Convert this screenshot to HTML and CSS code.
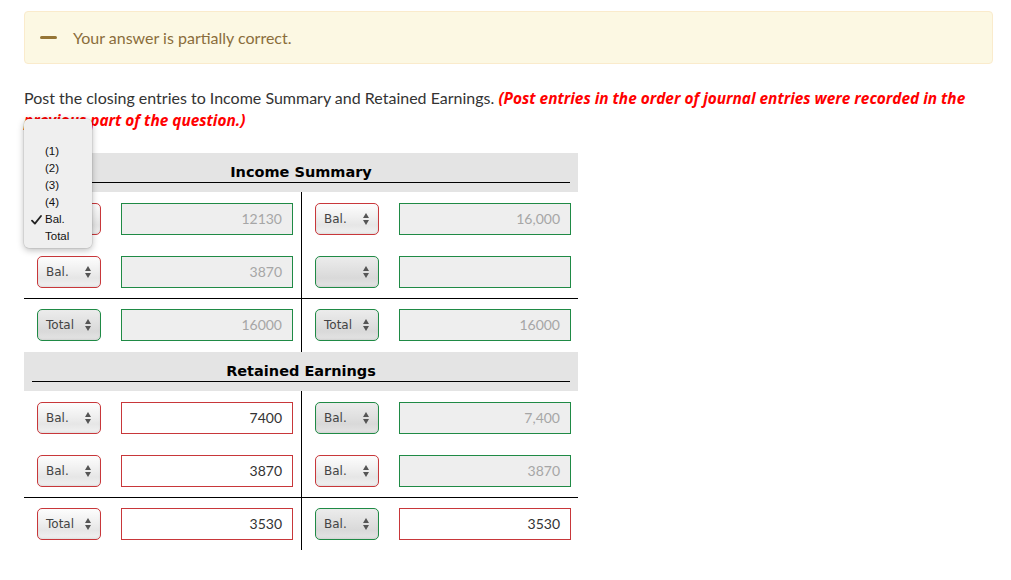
FILE: index.html
```html
<!DOCTYPE html>
<html>
<head>
<meta charset="utf-8">
<link rel="stylesheet" href="styles.css">
</head>
<body>
<div class="page">
  <div class="alert">
    <span class="alert-bar"></span>
    <span class="alert-text">Your answer is partially correct.</span>
  </div>
  <p class="prompt">Post the closing entries to Income Summary and Retained Earnings. <em class="hint">(Post entries in the order of journal entries were recorded in the previous part of the question.)</em></p>

  <div class="ledger">
    <div class="acct-head"><div class="acct-title">Income Summary</div></div>
    <div class="row">
      <div class="half">
        <div class="sel bad"><span class="sel-text">Bal.</span><span class="arrows"></span></div>
        <div class="inp ok dis">12130</div>
      </div>
      <div class="half right">
        <div class="sel bad"><span class="sel-text">Bal.</span><span class="arrows"></span></div>
        <div class="inp ok dis">16,000</div>
      </div>
    </div>
    <div class="row">
      <div class="half">
        <div class="sel bad"><span class="sel-text">Bal.</span><span class="arrows"></span></div>
        <div class="inp ok dis">3870</div>
      </div>
      <div class="half right">
        <div class="sel ok dis"><span class="sel-text"></span><span class="arrows"></span></div>
        <div class="inp ok dis"></div>
      </div>
    </div>
    <div class="row total">
      <div class="half">
        <div class="sel ok dis"><span class="sel-text">Total</span><span class="arrows"></span></div>
        <div class="inp ok dis">16000</div>
      </div>
      <div class="half right">
        <div class="sel ok dis"><span class="sel-text">Total</span><span class="arrows"></span></div>
        <div class="inp ok dis">16000</div>
      </div>
    </div>

    <div class="acct-head"><div class="acct-title">Retained Earnings</div></div>
    <div class="row">
      <div class="half">
        <div class="sel bad"><span class="sel-text">Bal.</span><span class="arrows"></span></div>
        <div class="inp bad">7400</div>
      </div>
      <div class="half right">
        <div class="sel ok dis"><span class="sel-text">Bal.</span><span class="arrows"></span></div>
        <div class="inp ok dis">7,400</div>
      </div>
    </div>
    <div class="row">
      <div class="half">
        <div class="sel bad"><span class="sel-text">Bal.</span><span class="arrows"></span></div>
        <div class="inp bad">3870</div>
      </div>
      <div class="half right">
        <div class="sel bad"><span class="sel-text">Bal.</span><span class="arrows"></span></div>
        <div class="inp ok dis">3870</div>
      </div>
    </div>
    <div class="row total last">
      <div class="half">
        <div class="sel bad"><span class="sel-text">Total</span><span class="arrows"></span></div>
        <div class="inp bad">3530</div>
      </div>
      <div class="half right">
        <div class="sel ok dis"><span class="sel-text">Bal.</span><span class="arrows"></span></div>
        <div class="inp bad">3530</div>
      </div>
    </div>
  </div>

  <ul class="menu">
    <li>(1)</li>
    <li>(2)</li>
    <li>(3)</li>
    <li>(4)</li>
    <li class="checked"><svg class="check" width="11" height="10" viewBox="0 0 11 10"><path d="M1 5.6 L3.9 8.6 L10 1" fill="none" stroke="#222" stroke-width="1.8" stroke-linejoin="round" stroke-linecap="round"/></svg>Bal.</li>
    <li>Total</li>
  </ul>
</div>
</body>
</html>
```

FILE: styles.css
```css
* { box-sizing: border-box; }
body {
  margin: 0;
  background: #fff;
  font-family: Lato, "Open Sans", sans-serif;
  color: #333;
}
.page {
  position: relative;
  padding: 11px 18px 0 24px;
}
.alert {
  height: 53px;
  background: #fcf8e3;
  border: 1px solid #faebcc;
  border-radius: 4px;
  display: flex;
  align-items: center;
  padding-left: 15px;
}
.alert-bar {
  width: 17px;
  height: 3px;
  border-radius: 2px;
  background: #957535;
  margin-right: 16px;
}
.alert-text {
  font-size: 16px;
  color: #8a6d3b;
}
.prompt {
  margin: 23px 0 0 0;
  font-size: 16px;
  line-height: 22px;
  height: 44px;
  width: 960px;
}
.hint {
  font-family: "Open Sans", sans-serif;
  font-weight: bold;
  font-style: italic;
  font-size: 15.4px;
  line-height: 1;
  color: #ff0000;
}
.ledger {
  width: 554px;
  margin-top: 22px;
}
.acct-head {
  height: 39px;
  background: #e4e4e4;
  padding: 0 8px;
}
.acct-title {
  height: 30px;
  border-bottom: 1px solid #000;
  text-align: center;
  font-family: "DejaVu Sans", sans-serif;
  font-weight: bold;
  font-size: 14.5px;
  line-height: 18px;
  padding-top: 10px;
  color: #000;
}
.row {
  display: flex;
  height: 53px;
}
.row.total {
  border-top: 1px solid #000;
  height: 54px;
}
.row.total.last {
  height: 53px;
}
.half {
  width: 277px;
  display: flex;
  align-items: center;
  gap: 20px;
  padding-left: 13px;
}
.half.right {
  border-left: 1px solid #000;
}
.row.total .half { padding-bottom: 1px; }
.sel {
  width: 64px;
  height: 32px;
  border: 1px solid;
  border-radius: 5px;
  display: flex;
  align-items: center;
  justify-content: space-between;
  padding: 0 8px 0 8px;
  font-family: "DejaVu Sans", sans-serif;
  font-size: 12px;
  color: #444;
  background: linear-gradient(to bottom, #fdfdfd 0%, #efefef 45%, #e6e6e6 70%, #f1f1f1 100%);
  box-shadow: inset 0 -1px 2px rgba(0,0,0,0.08);
}
.sel.dis {
  background: linear-gradient(to bottom, #ececec 0%, #e0e0e0 45%, #d9d9d9 70%, #e4e4e4 100%);
}
.arrows {
  width: 7px;
  height: 12px;
  position: relative;
}
.arrows::before, .arrows::after {
  content: "";
  position: absolute;
  left: 0;
  border-left: 3.5px solid transparent;
  border-right: 3.5px solid transparent;
}
.arrows::before {
  top: 0;
  border-bottom: 5px solid #555;
}
.arrows::after {
  bottom: 0;
  border-top: 5px solid #555;
}
.inp {
  width: 172px;
  height: 32px;
  border: 1px solid;
  background: #fff;
  text-align: right;
  padding-right: 10px;
  font-size: 14px;
  line-height: 30px;
  color: #333;
}
.inp.dis {
  background: #eeeeee;
  color: #a6a6a6;
}
.ok { border-color: #1f8a45; }
.bad { border-color: #c8373a; }

.menu {
  position: absolute;
  left: 24px;
  top: 119px;
  width: 68px;
  height: 129px;
  margin: 0;
  padding: 24px 0 0 0;
  list-style: none;
  background: #efefef;
  border-radius: 5px;
  box-shadow: 0 2px 7px rgba(0,0,0,0.28), 0 0 0 0.5px rgba(0,0,0,0.12);
  font-family: "Liberation Sans", Arial, sans-serif;
  font-size: 11.5px;
  color: #111;
}
.menu li {
  height: 17px;
  line-height: 17px;
  padding-left: 21px;
  position: relative;
}
.check {
  position: absolute;
  left: 7px;
  top: 4px;
}
```
